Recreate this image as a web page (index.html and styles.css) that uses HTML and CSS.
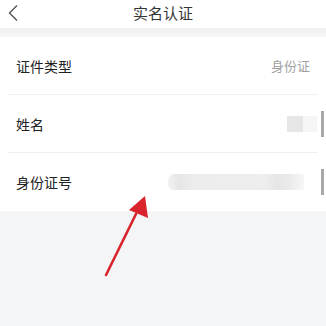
FILE: index.html
```html
<!DOCTYPE html>
<html lang="zh-CN">
<head>
    <meta charset="UTF-8">
    <meta name="viewport" content="width=device-width, initial-scale=1.0">
    <title>实名认证</title>
    <link rel="stylesheet" href="styles.css">
</head>
<body>
    <div class="header">
        <svg class="back" width="12" height="18" viewBox="0 0 12 18">
            <polyline points="10,1.5 2.5,9 10,16.5" fill="none" stroke="#555" stroke-width="1.4"/>
        </svg>
        <h1>实名认证</h1>
    </div>
    <div class="gap"></div>
    <div class="list">
        <div class="row">
            <span class="label">证件类型</span>
            <span class="value">身份证</span>
        </div>
        <div class="row">
            <span class="label">姓名</span>
            <span class="blur blur-name"></span>
            <span class="scroll"></span>
        </div>
        <div class="row last">
            <span class="label">身份证号</span>
            <span class="blur blur-id"></span>
            <span class="scroll"></span>
        </div>
    </div>
    <svg class="arrow" width="60" height="90" viewBox="0 0 60 90">
        <line x1="8" y1="83" x2="38" y2="22" stroke="#d9232d" stroke-width="2.6" stroke-linecap="round"/>
        <polygon points="47,4 50,26 31,18" fill="#d9232d"/>
    </svg>
</body>
</html>
```

FILE: styles.css
```css
body {
    margin: 0;
    font-family: "Noto Sans CJK SC", "Noto Sans", sans-serif;
    background-color: #f4f5f7;
    height: 326px;
    overflow: hidden;
    position: relative;
}
.header {
    height: 28px;
    background: white;
    display: flex;
    align-items: center;
    justify-content: center;
    position: relative;
}
.header .back {
    position: absolute;
    left: 7px;
    top: 4px;
}
.header h1 {
    margin: 0;
    font-size: 15px;
    font-weight: normal;
    color: #333;
    margin-top: -4px;
}
.gap {
    height: 9px;
    background: linear-gradient(#f0f0f2, #f7f7f8);
}
.list {
    background: white;
    padding: 0 8px;
}
.row {
    height: 57px;
    display: flex;
    align-items: center;
    border-bottom: 1px solid #f0f0f0;
    padding: 0 8px;
    position: relative;
}
.row.last {
    border-bottom: none;
    height: 58px;
}
.label {
    font-size: 14px;
    color: #222;
    flex: 1;
}
.value {
    font-size: 13px;
    color: #a0a0a0;
    margin-right: 0;
}
.blur {
    display: block;
}
.blur-name {
    width: 16px;
    height: 16px;
    background: #e6e6e6;
    margin-right: 7px;
    box-shadow: 14px 0 0 #f6f6f6;
}
.blur-id {
    width: 136px;
    height: 16px;
    border-radius: 6px 0 0 6px;
    background: linear-gradient(90deg, #f2f2f2, #e6e6e6 8%, #ededed 20%, #eeeeee 70%, #e6e6e6 80%, #ebebeb 90%, #f7f7f7);
    margin-right: 6px;
}
.scroll {
    position: absolute;
    right: -6px;
    top: 16px;
    width: 3px;
    height: 26px;
    background: #a8a8a8;
}
.arrow {
    position: absolute;
    left: 98px;
    top: 192px;
}
```
